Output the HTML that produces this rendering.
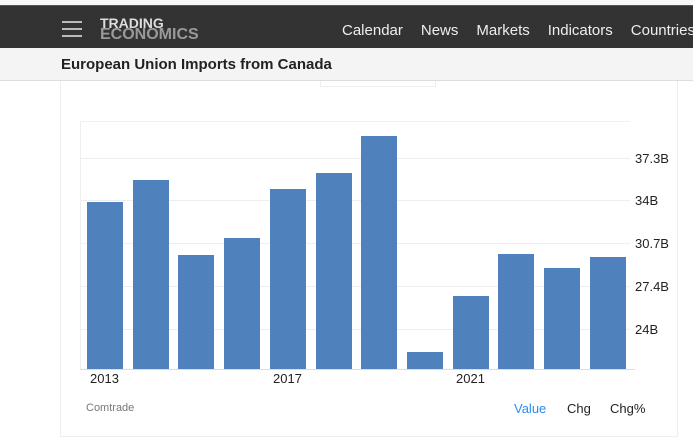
<!DOCTYPE html><html><head><style>
body{margin:0;width:693px;height:446px;overflow:hidden;background:#fff;font-family:"Liberation Sans",sans-serif;position:relative}
.a{position:absolute}
.bar{position:absolute;background:#4f81bd;width:36px;bottom:77px}
.yl{position:absolute;left:635px;font-size:13px;color:#222}
.xl{position:absolute;top:371px;font-size:13px;color:#222}
.g{position:absolute;left:80px;width:550px;height:1px;background:#eee}
</style></head><body>
<div class="a" style="top:0;left:0;width:693px;height:5px;background:#f8f8f8"></div>
<div class="a" style="top:5px;left:0;width:693px;height:42px;background:#333;border-top:1px solid #555;border-bottom:1px solid #222"></div>
<div class="a" style="left:62px;top:21px;width:20px;height:2px;background:#bbb;box-shadow:0 7px 0 #bbb,0 14px 0 #bbb"></div>
<div class="a" style="left:100px;top:17px;color:#ddd;font-weight:bold;font-size:14px;line-height:12px">TRADING</div>
<div class="a" style="left:100px;top:28px;color:#999;font-weight:bold;font-size:16px;line-height:14px">ECONOMICS</div>
<div class="a" style="left:342px;top:22px;color:#eee;font-size:15px;white-space:nowrap">Calendar<span style="margin-left:18px">News</span><span style="margin-left:18px">Markets</span><span style="margin-left:18px">Indicators</span><span style="margin-left:18px">Countries</span></div>
<div class="a" style="top:48px;left:0;width:693px;height:32px;background:#f4f4f4;border-bottom:1px solid #ddd"></div>
<div class="a" style="left:61px;top:56px;font-weight:bold;font-size:15px;color:#222">European Union Imports from Canada</div>
<div class="a" style="left:60px;top:81px;width:616px;height:355px;border:1px solid #eee;border-top:none"></div>
<div class="a" style="left:320px;top:81px;width:114px;height:5px;border:1px solid #eee;border-top:none"></div>
<div class="a" style="left:80px;top:121px;width:550px;height:1px;background:#f2f2f2"></div>
<div class="g" style="top:158px"></div><div class="g" style="top:200px"></div><div class="g" style="top:243px"></div><div class="g" style="top:286px"></div><div class="g" style="top:329px"></div>
<div class="a" style="left:80px;top:121px;width:1px;height:248px;background:#eee"></div>
<div class="a" style="left:80px;top:369px;width:555px;height:1px;background:#ddd"></div>
<div class="bar" style="left:87px;top:202px"></div>
<div class="bar" style="left:133px;top:180px"></div>
<div class="bar" style="left:178px;top:255px"></div>
<div class="bar" style="left:224px;top:238px"></div>
<div class="bar" style="left:270px;top:189px"></div>
<div class="bar" style="left:316px;top:173px"></div>
<div class="bar" style="left:361px;top:136px"></div>
<div class="bar" style="left:407px;top:352px"></div>
<div class="bar" style="left:453px;top:296px"></div>
<div class="bar" style="left:498px;top:254px"></div>
<div class="bar" style="left:544px;top:268px"></div>
<div class="bar" style="left:590px;top:257px"></div>
<div class="yl" style="top:151px">37.3B</div>
<div class="yl" style="top:193px">34B</div>
<div class="yl" style="top:236px">30.7B</div>
<div class="yl" style="top:279px">27.4B</div>
<div class="yl" style="top:322px">24B</div>
<div class="xl" style="left:90px">2013</div>
<div class="xl" style="left:273px">2017</div>
<div class="xl" style="left:456px">2021</div>
<div class="a" style="left:86px;top:402px;font-size:11px;color:#777">Comtrade</div>
<div class="a" style="left:514px;top:401px;font-size:13px;color:#2a8ef0">Value</div>
<div class="a" style="left:567px;top:401px;font-size:13px;color:#222">Chg</div>
<div class="a" style="left:610px;top:401px;font-size:13px;color:#222">Chg%</div>
</body></html>
